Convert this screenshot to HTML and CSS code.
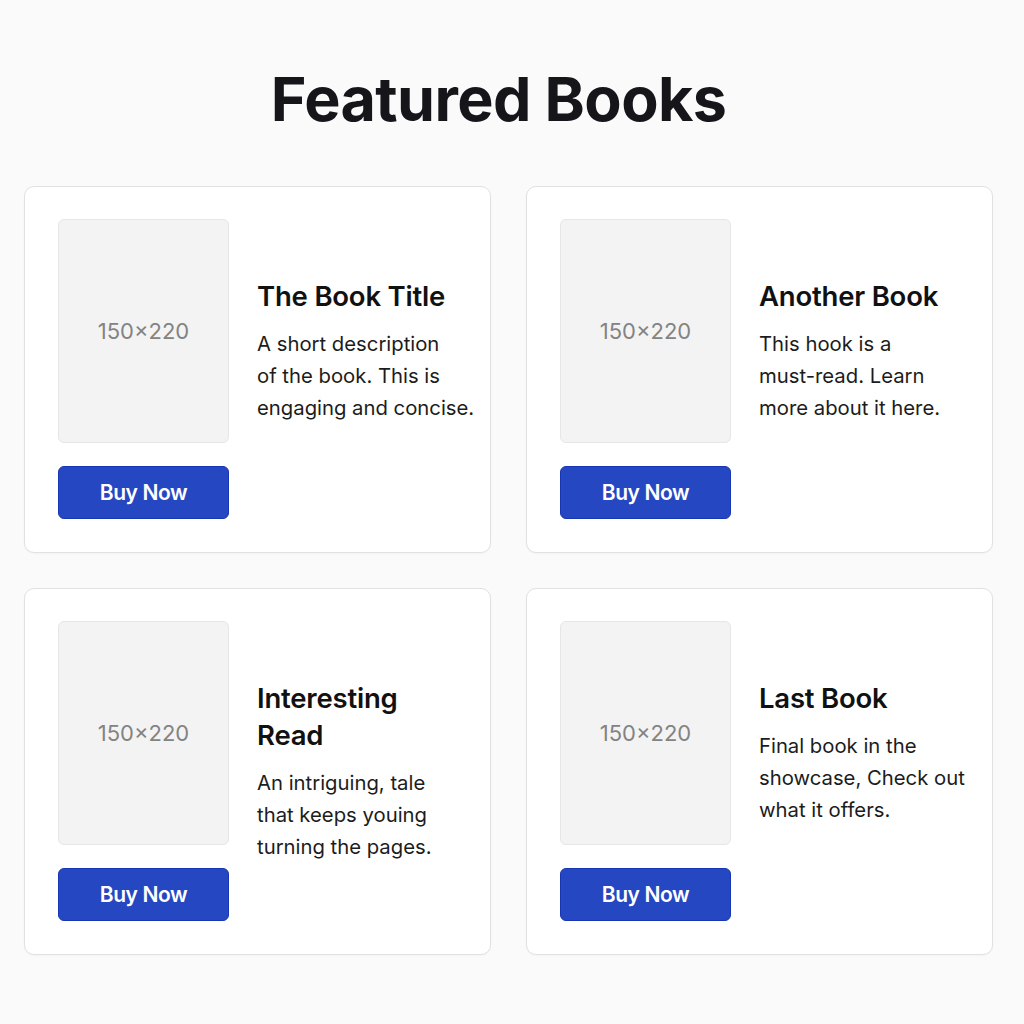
FILE: index.html
```html
<!DOCTYPE html>
<html lang="en">
<head>
<meta charset="utf-8">
<title>Featured Books</title>
<link rel="stylesheet" href="styles.css">
</head>
<body>
<main class="page">
  <h1 class="page-title">Featured Books</h1>
  <section class="grid">
    <article class="card">
      <div class="media">
        <div class="cover">150×220</div>
        <button class="buy">Buy Now</button>
      </div>
      <div class="info">
        <h2 class="book-title">The Book Title</h2>
        <p class="desc">A short description<br>of the book. This is<br>engaging and concise.</p>
      </div>
    </article>
    <article class="card">
      <div class="media">
        <div class="cover">150×220</div>
        <button class="buy">Buy Now</button>
      </div>
      <div class="info">
        <h2 class="book-title">Another Book</h2>
        <p class="desc">This hook is a<br>must-read. Learn<br>more about it here.</p>
      </div>
    </article>
    <article class="card">
      <div class="media">
        <div class="cover">150×220</div>
        <button class="buy">Buy Now</button>
      </div>
      <div class="info">
        <h2 class="book-title">Interesting Read</h2>
        <p class="desc">An intriguing, tale<br>that keeps youing<br>turning the pages.</p>
      </div>
    </article>
    <article class="card">
      <div class="media">
        <div class="cover">150×220</div>
        <button class="buy">Buy Now</button>
      </div>
      <div class="info">
        <h2 class="book-title">Last Book</h2>
        <p class="desc">Final book in the<br>showcase, Check out<br>what it offers.</p>
      </div>
    </article>
  </section>
</main>
</body>
</html>
```

FILE: styles.css
```css
* { box-sizing: border-box; }
html, body { margin: 0; padding: 0; }
body {
  background: #fafafa;
  font-family: Inter, "Noto Sans", "Liberation Sans", sans-serif;
  color: #111;
}
.page {
  padding: 61px 31px 60px 24px;
}
.page-title {
  margin: 0 0 49px;
  padding-right: 20px;
  text-align: center;
  font-size: 61px;
  line-height: 76px;
  font-weight: 700;
  letter-spacing: -0.6px;
  color: #15151a;
}
.grid {
  display: grid;
  grid-template-columns: repeat(2, minmax(0, 1fr));
  column-gap: 35px;
  row-gap: 35px;
}
.card {
  display: flex;
  background: #fff;
  border: 1px solid #e1e1e1;
  border-radius: 10px;
  padding: 32px 24px 33px 33px;
  gap: 28px;
  box-shadow: 0 1px 2px rgba(0,0,0,0.03);
  min-width: 0;
}
.media {
  display: flex;
  flex-direction: column;
  gap: 23px;
  width: 171px;
  flex: none;
}
.cover {
  height: 224px;
  background: #f3f3f3;
  border: 1px solid #e6e6e6;
  border-radius: 6px;
  display: flex;
  align-items: center;
  justify-content: center;
  color: #838383;
  font-size: 22px;
}
.buy {
  height: 53px;
  background: #2547c2;
  border: 1px solid #1836b3;
  border-radius: 6px;
  color: #fff;
  font-family: inherit;
  font-size: 21px;
  font-weight: 600;
  letter-spacing: -0.4px;
  cursor: pointer;
}
.info {
  flex: 1;
  min-width: 0;
  padding-top: 59px;
}
.book-title {
  margin: 0;
  font-size: 27.5px;
  line-height: 37px;
  font-weight: 600;
  letter-spacing: -0.2px;
  color: #111;
}
.desc {
  margin: 13px 0 0;
  font-size: 20.3px;
  line-height: 32px;
  white-space: nowrap;
  color: #1c1c1c;
}
```
